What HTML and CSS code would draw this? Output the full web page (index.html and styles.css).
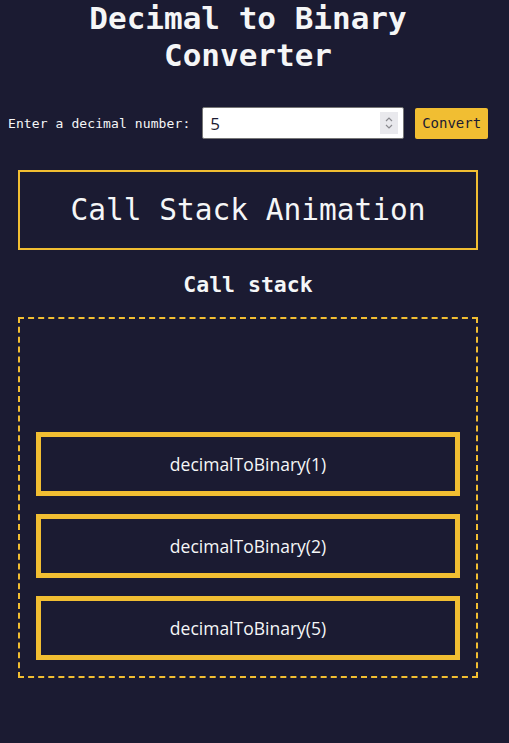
FILE: index.html
```html
<!DOCTYPE html>
<html lang="en">
<head>
<meta charset="utf-8">
<title>Decimal to Binary Converter</title>
<link rel="stylesheet" href="styles.css">
</head>
<body>
<main class="page">
  <h1 class="title">Decimal to Binary Converter</h1>
  <div class="input-row">
    <label class="label" for="number-input">Enter a decimal number:</label>
    <div class="field">
      <input class="number-input" id="number-input" type="text" value="5">
      <span class="spinner">
        <svg width="10" height="16" viewBox="0 0 10 16"><path d="M2 6 L5 3 L8 6" fill="none" stroke="#8a8a8f" stroke-width="1.2"/><path d="M2 10 L5 13 L8 10" fill="none" stroke="#8a8a8f" stroke-width="1.2"/></svg>
      </span>
    </div>
    <button class="convert-btn" type="button">Convert</button>
  </div>
  <div class="animation-box">Call Stack Animation</div>
  <h2 class="stack-title">Call stack</h2>
  <div class="stack">
    <div class="frame">decimalToBinary(1)</div>
    <div class="frame">decimalToBinary(2)</div>
    <div class="frame">decimalToBinary(5)</div>
  </div>
</main>
</body>
</html>
```
FILE: styles.css
```css
html, body {
  margin: 0;
  padding: 0;
  background: #1b1b32;
  color: #f5f6f7;
  font-family: "DejaVu Sans Mono", monospace;
}
body {
  padding: 0 8px;
  height: 743px;
  overflow: hidden;
}
.page {
  width: 480px;
}
.title {
  margin: 0;
  font-size: 31px;
  line-height: 37px;
  font-weight: bold;
  text-align: center;
}
.input-row {
  display: flex;
  align-items: center;
  margin-top: 33px;
  height: 32px;
}
.label {
  font-size: 13px;
  letter-spacing: 0.1px;
  margin-right: 12px;
  white-space: nowrap;
}
.field {
  position: relative;
  width: 202px;
  height: 32px;
}
.number-input {
  box-sizing: border-box;
  width: 202px;
  height: 32px;
  margin: 0;
  border: 1px solid #767676;
  border-radius: 2px;
  padding: 0 7px;
  font-family: "Open Sans", "Noto Sans", sans-serif;
  font-size: 17px;
  color: #1b1b32;
  background: #fff;
}
.spinner {
  position: absolute;
  top: 5px;
  right: 6px;
  width: 18px;
  height: 22px;
  background: #e9e9ed;
  display: flex;
  align-items: center;
  justify-content: center;
}
.convert-btn {
  margin-left: 11px;
  width: 73px;
  height: 31px;
  padding: 0;
  border: none;
  border-radius: 2px;
  background: #f1be32;
  color: #1b1b32;
  font-family: "DejaVu Sans Mono", monospace;
  font-size: 14px;
}
.animation-box {
  margin: 31px 10px 0;
  height: 76px;
  border: 2px solid #f1be32;
  display: flex;
  align-items: center;
  justify-content: center;
  font-size: 29.5px;
}
.stack-title {
  margin: 22px 0 0;
  font-size: 21.5px;
  line-height: 26px;
  text-align: center;
  font-weight: bold;
}
.stack {
  box-sizing: border-box;
  margin: 19px 10px 0;
  height: 361px;
  border: 2px dashed #f1be32;
  padding: 16px;
  display: flex;
  flex-direction: column;
  justify-content: flex-end;
  gap: 18px;
}
.frame {
  box-sizing: border-box;
  height: 64px;
  border: 5px solid #f1be32;
  display: flex;
  align-items: center;
  justify-content: center;
  font-family: "Open Sans", "Noto Sans", sans-serif;
  font-size: 17.5px;
  color: #f5f6f7;
}
```
